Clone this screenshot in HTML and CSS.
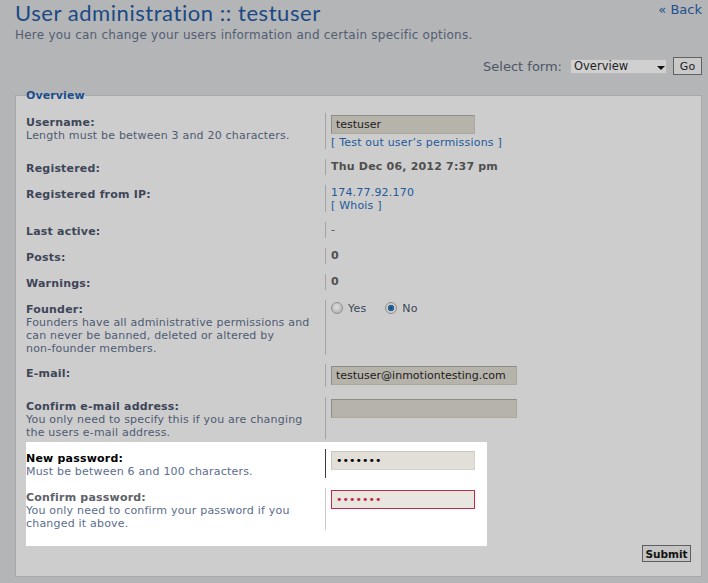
FILE: index.html
```html
<!DOCTYPE html>
<html>
<head>
<meta charset="utf-8">
<title>User administration</title>
<link rel="stylesheet" href="styles.css">
</head>
<body>
<div class="head">
  <h1 class="title">User administration :: testuser</h1>
  <a class="back" href="#">« Back</a>
</div>
<p class="intro">Here you can change your users information and certain specific options.</p>
<form class="selectform">
  <label class="sel-label">Select form:</label>
  <span class="selwrap">
    <select class="sel"><option>Overview</option></select>
    <svg class="arrow" width="8" height="4" viewBox="0 0 8 4"><path d="M0 0H8L4 4Z" fill="#111"/></svg>
  </span>
  <button type="button" class="go">Go</button>
</form>

<fieldset class="panel">
  <legend class="legend">Overview</legend>

  <div class="row">
    <div class="dt"><label class="lbl">Username:</label><span class="explain">Length must be between 3 and 20 characters.</span></div>
    <div class="dd dd-user"><input class="inp" type="text" value="testuser"><a class="link link-block" href="#">[ Test out user’s permissions ]</a></div>
  </div>
  <div class="row">
    <div class="dt"><label class="lbl">Registered:</label></div>
    <div class="dd"><strong class="val">Thu Dec 06, 2012 7:37 pm</strong></div>
  </div>
  <div class="row">
    <div class="dt"><label class="lbl">Registered from IP:</label></div>
    <div class="dd dd-ip"><a class="link" href="#">174.77.92.170</a><br><a class="link" href="#">[ Whois ]</a></div>
  </div>
  <div class="row">
    <div class="dt"><label class="lbl">Last active:</label></div>
    <div class="dd"><span class="dash">-</span></div>
  </div>
  <div class="row">
    <div class="dt"><label class="lbl">Posts:</label></div>
    <div class="dd"><strong class="val">0</strong></div>
  </div>
  <div class="row">
    <div class="dt"><label class="lbl">Warnings:</label></div>
    <div class="dd"><strong class="val">0</strong></div>
  </div>
  <div class="row row-founder">
    <div class="dt"><label class="lbl">Founder:</label><span class="explain">Founders have all administrative permissions and can never be banned, deleted or altered by non‑founder members.</span></div>
    <div class="dd">
      <div class="radios">
        <label class="ropt"><input class="radio" type="radio" name="founder">Yes</label>
        <label class="ropt"><input class="radio" type="radio" name="founder" checked>No</label>
      </div>
    </div>
  </div>
  <div class="row">
    <div class="dt"><label class="lbl">E-mail:</label></div>
    <div class="dd"><input class="inp inp-wide" type="text" value="testuser@inmotiontesting.com"></div>
  </div>
  <div class="row row-before-hl">
    <div class="dt"><label class="lbl">Confirm e-mail address:</label><span class="explain">You only need to specify this if you are changing the users e-mail address.</span></div>
    <div class="dd"><input class="inp inp-wide" type="text" value=""></div>
  </div>

  <div class="hl">
    <div class="row">
      <div class="dt"><label class="lbl lbl-black">New password:</label><span class="explain explain-hl">Must be between 6 and 100 characters.</span></div>
      <div class="dd dd-dark"><input class="inp inp-light" type="password" value="1234567"></div>
    </div>
    <div class="row row-last">
      <div class="dt"><label class="lbl lbl-grey">Confirm password:</label><span class="explain explain-hl">You only need to confirm your password if you changed it above.</span></div>
      <div class="dd dd-light"><input class="inp inp-focus" type="password" value="1234567"></div>
    </div>
  </div>

  <div class="submitrow"><button type="button" class="submit">Submit</button></div>
</fieldset>
</body>
</html>
```

FILE: styles.css
```css
* { box-sizing: border-box; }
html, body { margin: 0; }
body {
  background: #b4b5b7;
  font-family: "DejaVu Sans", Verdana, sans-serif;
  font-size: 11px;
  line-height: 13px;
  color: #3d4658;
  padding: 0 6px 0 15px;
  height: 583px;
  overflow: hidden;
}
.head { display: flex; justify-content: space-between; align-items: flex-start; }
.title {
  margin: 0;
  font-family: Lato, "DejaVu Sans", sans-serif;
  font-weight: normal;
  font-size: 22px;
  line-height: 26px;
  letter-spacing: 0.55px;
  color: #1b4984;
}
.back {
  margin-top: 2px;
  font-size: 13px;
  line-height: 15px;
  color: #1d4f8c;
  text-decoration: none;
}
.intro { margin: 2px 0 0; font-size: 12px; line-height: 15px; letter-spacing: 0.23px; color: #525d72; }

.selectform {
  display: flex;
  justify-content: flex-end;
  align-items: center;
  margin-top: 14px;
  height: 18px;
}
.sel-label { font-size: 13px; color: #4d5568; margin-right: 8px; }
.selwrap { position: relative; display: block; width: 97px; height: 15px; }
.sel {
  appearance: none;
  -webkit-appearance: none;
  display: block;
  width: 97px;
  height: 15px;
  margin: 0;
  padding: 0 0 0 3px;
  border: 1px solid #b8b8b8;
  background: #d0d0d0;
  font-family: "DejaVu Sans", Verdana, sans-serif;
  font-size: 11.5px;
  line-height: 13px;
  color: #1e1e1e;
}
.arrow { position: absolute; left: 87px; top: 7px; }
.go {
  margin-left: 6px;
  width: 29px;
  height: 18px;
  padding: 0;
  border: 1px solid #626262;
  background: #c9c9c9;
  font-family: "DejaVu Sans", Verdana, sans-serif;
  font-size: 11px;
  color: #1e1e1e;
}

.panel {
  margin: 14px 0 0;
  border: 1px solid #a8a8a8;
  background: #cdcdcd;
  padding: 11px 10px 14px;
  min-width: 0;
}
.legend {
  padding: 0;
  font-weight: bold;
  font-size: 11px;
  line-height: 13px;
  letter-spacing: 0.1px;
  color: #1b4d8b;
}

.row { display: flex; margin-bottom: 10px; letter-spacing: 0.2px; }
.row-founder { margin-bottom: 9px; }
.dt { width: 299px; flex: none; padding: 3px 10px 0 0; }
.lbl { display: block; font-weight: bold; color: #3d4658; }
.explain { display: block; color: #4e5b73; }
.dd { flex: 1; border-left: 1px solid #a3a3a3; padding: 1px 0 1px 5px; }
.dd-user { padding-bottom: 0; }
.link-block { display: block; margin-top: 2px; }
.dd-ip { padding-bottom: 0; }
.link { color: #22599a; text-decoration: none; }
.val { font-weight: bold; color: #4f4f4f; }
.dash { color: #4f4f4f; }

.inp {
  display: block;
  margin: 1px 0;
  width: 144px;
  height: 19px;
  padding: 0 4px;
  border: 1px solid;
  border-color: #8e8c86 #aaa79f #aaa79f #8e8c86;
  background: #b6b3ab;
  font-family: "DejaVu Sans", Verdana, sans-serif;
  font-size: 11px;
  color: #1c1c1c;
  outline: none;
}
.inp-wide { width: 186px; }

.radios { display: flex; align-items: center; margin-top: 0; height: 14px; }
.ropt { display: flex; align-items: center; color: #3d4658; margin-right: 19px; }
.radio {
  appearance: none;
  -webkit-appearance: none;
  width: 12px;
  height: 12px;
  margin: 0 5px 0 0;
  border-radius: 50%;
  border: 1px solid #8f8f8f;
  background: radial-gradient(circle at 45% 40%, #dedede 0, #c4c4c4 50%, #a9a9a9 100%);
}
.radio:checked {
  background: radial-gradient(circle at 50% 50%, #0b3b66 0, #2e6fa8 2.2px, #2a5a86 3px, #d2d2d2 3.6px, #b9b9b9 100%);
}

.row-before-hl { margin-bottom: 3px; }
.hl {
  background: #ffffff;
  width: 461px;
  padding: 7px 0 16px;
}
.row-last { margin-bottom: 0; }
.lbl-black { color: #000000; }
.lbl-grey { color: #5d6169; }
.explain-hl { color: #5b6d8c; }
.dd-dark { border-left-color: #3c3c3c; }
.dd-light { border-left-color: #c9c9c9; }
.inp-light {
  background: #e2dfd8;
  border-color: #c9c5bc #d6d2ca #d6d2ca #c9c5bc;
  color: #000;
}
.inp-focus {
  background: #e8e6df;
  border-color: #c0294b;
  color: #c0294b;
}

.submitrow { display: flex; justify-content: flex-end; margin-top: -1px; }
.submit {
  width: 49px;
  height: 17px;
  padding: 0;
  border: 1px solid #5e5e5e;
  background: #c4c4c4;
  font-family: "DejaVu Sans", Verdana, sans-serif;
  font-weight: bold;
  font-size: 10.5px;
  color: #111;
}
```
